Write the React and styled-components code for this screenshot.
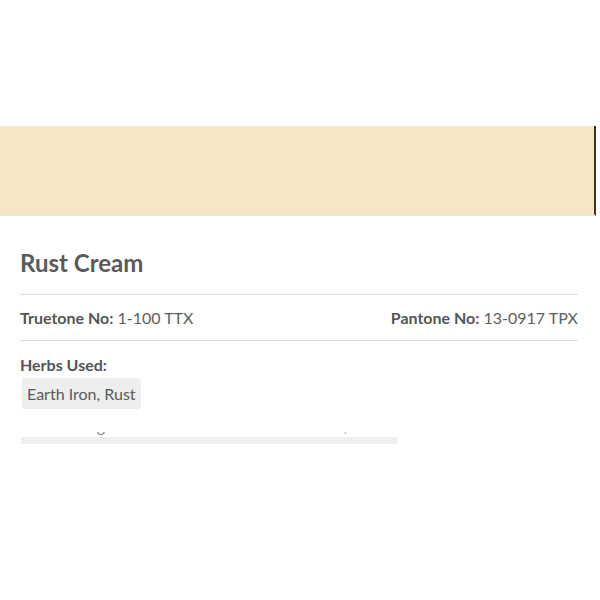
import React from "react";
import styled, { createGlobalStyle } from "styled-components";

const Global = createGlobalStyle`
  html, body { margin: 0; padding: 0; background: #ffffff; }
  body { font-family: Lato, "Noto Sans", "Liberation Sans", sans-serif; color: #5b5b5b; }
`;

const Page = styled.div`
  width: 600px;
  height: 600px;
  overflow: hidden;
  background: #fff;
`;

const TopSpace = styled.div`
  height: 126px;
`;

const Swatch = styled.div`
  box-sizing: border-box;
  width: 596px;
  height: 90px;
  background: ${(p) => p.$color};
  border-right: 2px solid #3b322c;
  border-bottom: 2px solid #ece5d2;
`;

const Body = styled.div`
  padding: 0 22px 0 20px;
`;

const Title = styled.h2`
  margin: 32px 0 0;
  font-size: 24px;
  line-height: 30px;
  font-weight: 700;
  color: #5a5a5a;
  padding-bottom: 16px;
  border-bottom: 1px solid #dcdcdc;
`;

const InfoRow = styled.div`
  display: flex;
  justify-content: space-between;
  padding: 13px 0 12px;
  border-bottom: 1px solid #dcdcdc;
  font-size: 16px;
  line-height: 20px;
  color: #5e5e5e;
`;

const Label = styled.b`
  font-weight: 700;
  color: #555;
`;

const HerbsLabel = styled.div`
  margin-top: 14px;
  font-size: 16px;
  line-height: 20px;
  font-weight: 700;
  color: #555;
`;

const Chip = styled.div`
  display: inline-block;
  margin: 3px 0 0 2px;
  padding: 6px 5px 5px;
  background: #eeeeee;
  border-radius: 3px;
  font-size: 16px;
  line-height: 20px;
  color: #5b5b5b;
`;

const Clipped = styled.div`
  margin: 23px 0 0 1px;
  height: 12px;
  width: 440px;
  overflow: hidden;
  background: linear-gradient(to bottom, transparent 5px, #efefef 5px) no-repeat;
  background-size: 376px 100%;
`;

const ClippedText = styled.div`
  margin-top: -16px;
  padding-left: 6px;
  font-size: 16px;
  line-height: 20px;
  white-space: nowrap;
  color: #8a8a8a;
`;

export default function App() {
  return (
    <Page>
      <Global />
      <TopSpace />
      <Swatch $color="#f5e6c5" />
      <Body>
        <Title>Rust Cream</Title>
        <InfoRow>
          <span>
            <Label>Truetone No:</Label> 1-100 TTX
          </span>
          <span>
            <Label>Pantone No:</Label> 13-0917 TPX
          </span>
        </InfoRow>
        <HerbsLabel>Herbs Used:</HerbsLabel>
        <Chip>Earth Iron, Rust</Chip>
        <Clipped>
          <ClippedText>
            Hot setting in a small brass vat for hours then, rinse and
            soak in cold water overnight, dry it.
          </ClippedText>
        </Clipped>
      </Body>
    </Page>
  );
}
